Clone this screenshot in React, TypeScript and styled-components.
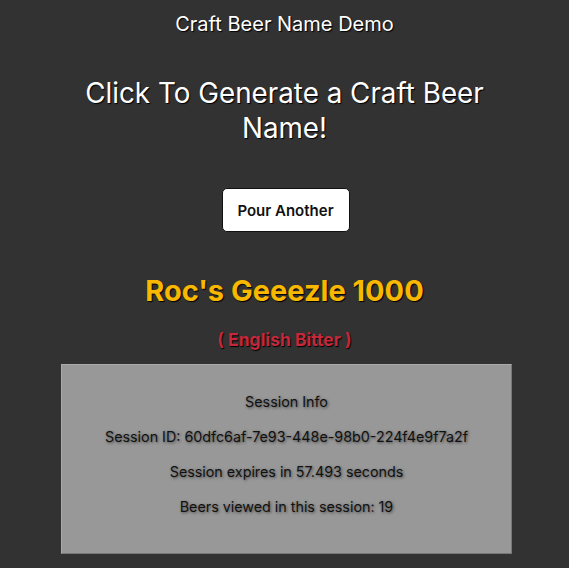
import styled, { createGlobalStyle } from "styled-components";

const GlobalStyle = createGlobalStyle`
  body {
    margin: 0;
    background-color: #323232;
    font-family: Inter, "Noto Sans", sans-serif;
    color: #fff;
  }
`;

const Page = styled.div`
  display: flex;
  flex-direction: column;
  align-items: center;
  min-height: 568px;
  padding-top: 12px;
  box-sizing: border-box;
`;

const Header = styled.div`
  font-size: 20px;
  line-height: 24px;
  text-shadow: 1px 1px 1px #000;
`;

const Heading = styled.h1`
  max-width: 420px;
  margin: 40px 0 42px;
  font-size: 27.8px;
  line-height: 35px;
  font-weight: 400;
  text-align: center;
  text-shadow: 1px 1px 1px #000;
`;

const PourButton = styled.button`
  width: 128px;
  height: 44px;
  margin-left: 2px;
  background: #fff;
  border: 1px solid #111;
  border-radius: 5px;
  font-family: Inter, "Noto Sans", sans-serif;
  font-size: 15px;
  font-weight: 600;
  color: #111;
  cursor: pointer;
`;

const BeerName = styled.h2`
  margin: 42px 0 22px;
  font-size: 29px;
  line-height: 34px;
  font-weight: 700;
  color: #f9b800;
  text-shadow: 1px 1px 1px #000;
`;

const BeerStyle = styled.div`
  font-size: 17.5px;
  line-height: 20px;
  font-weight: 700;
  color: #c4283b;
  text-shadow: 1px 1px 1px #000;
`;

const SessionBox = styled.div`
  margin: 14px 0 0 4px;
  width: 451px;
  box-sizing: border-box;
  padding: 28px 0 38px;
  display: flex;
  flex-direction: column;
  align-items: center;
  gap: 18px;
  background: #989898;
  border: 1px solid #777;
  border-top-color: #aaa;
  border-left-color: #aaa;
  color: #111;
`;

const SessionLine = styled.p`
  margin: 0;
  font-size: 14.3px;
  line-height: 17px;
  text-shadow: 1px 1px 3px rgba(0, 0, 0, 0.55);
`;

const session = {
  id: "60dfc6af-7e93-448e-98b0-224f4e9f7a2f",
  expires: 57.493,
  viewed: 19,
};

export default function App() {
  return (
    <>
      <GlobalStyle />
      <Page>
        <Header>Craft Beer Name Demo</Header>
        <Heading>Click To Generate a Craft Beer Name!</Heading>
        <PourButton>Pour Another</PourButton>
        <BeerName>Roc's Geeezle 1000</BeerName>
        <BeerStyle>( English Bitter )</BeerStyle>
        <SessionBox>
          <SessionLine>Session Info</SessionLine>
          <SessionLine>Session ID: {session.id}</SessionLine>
          <SessionLine>Session expires in {session.expires} seconds</SessionLine>
          <SessionLine>Beers viewed in this session: {session.viewed}</SessionLine>
        </SessionBox>
      </Page>
    </>
  );
}
